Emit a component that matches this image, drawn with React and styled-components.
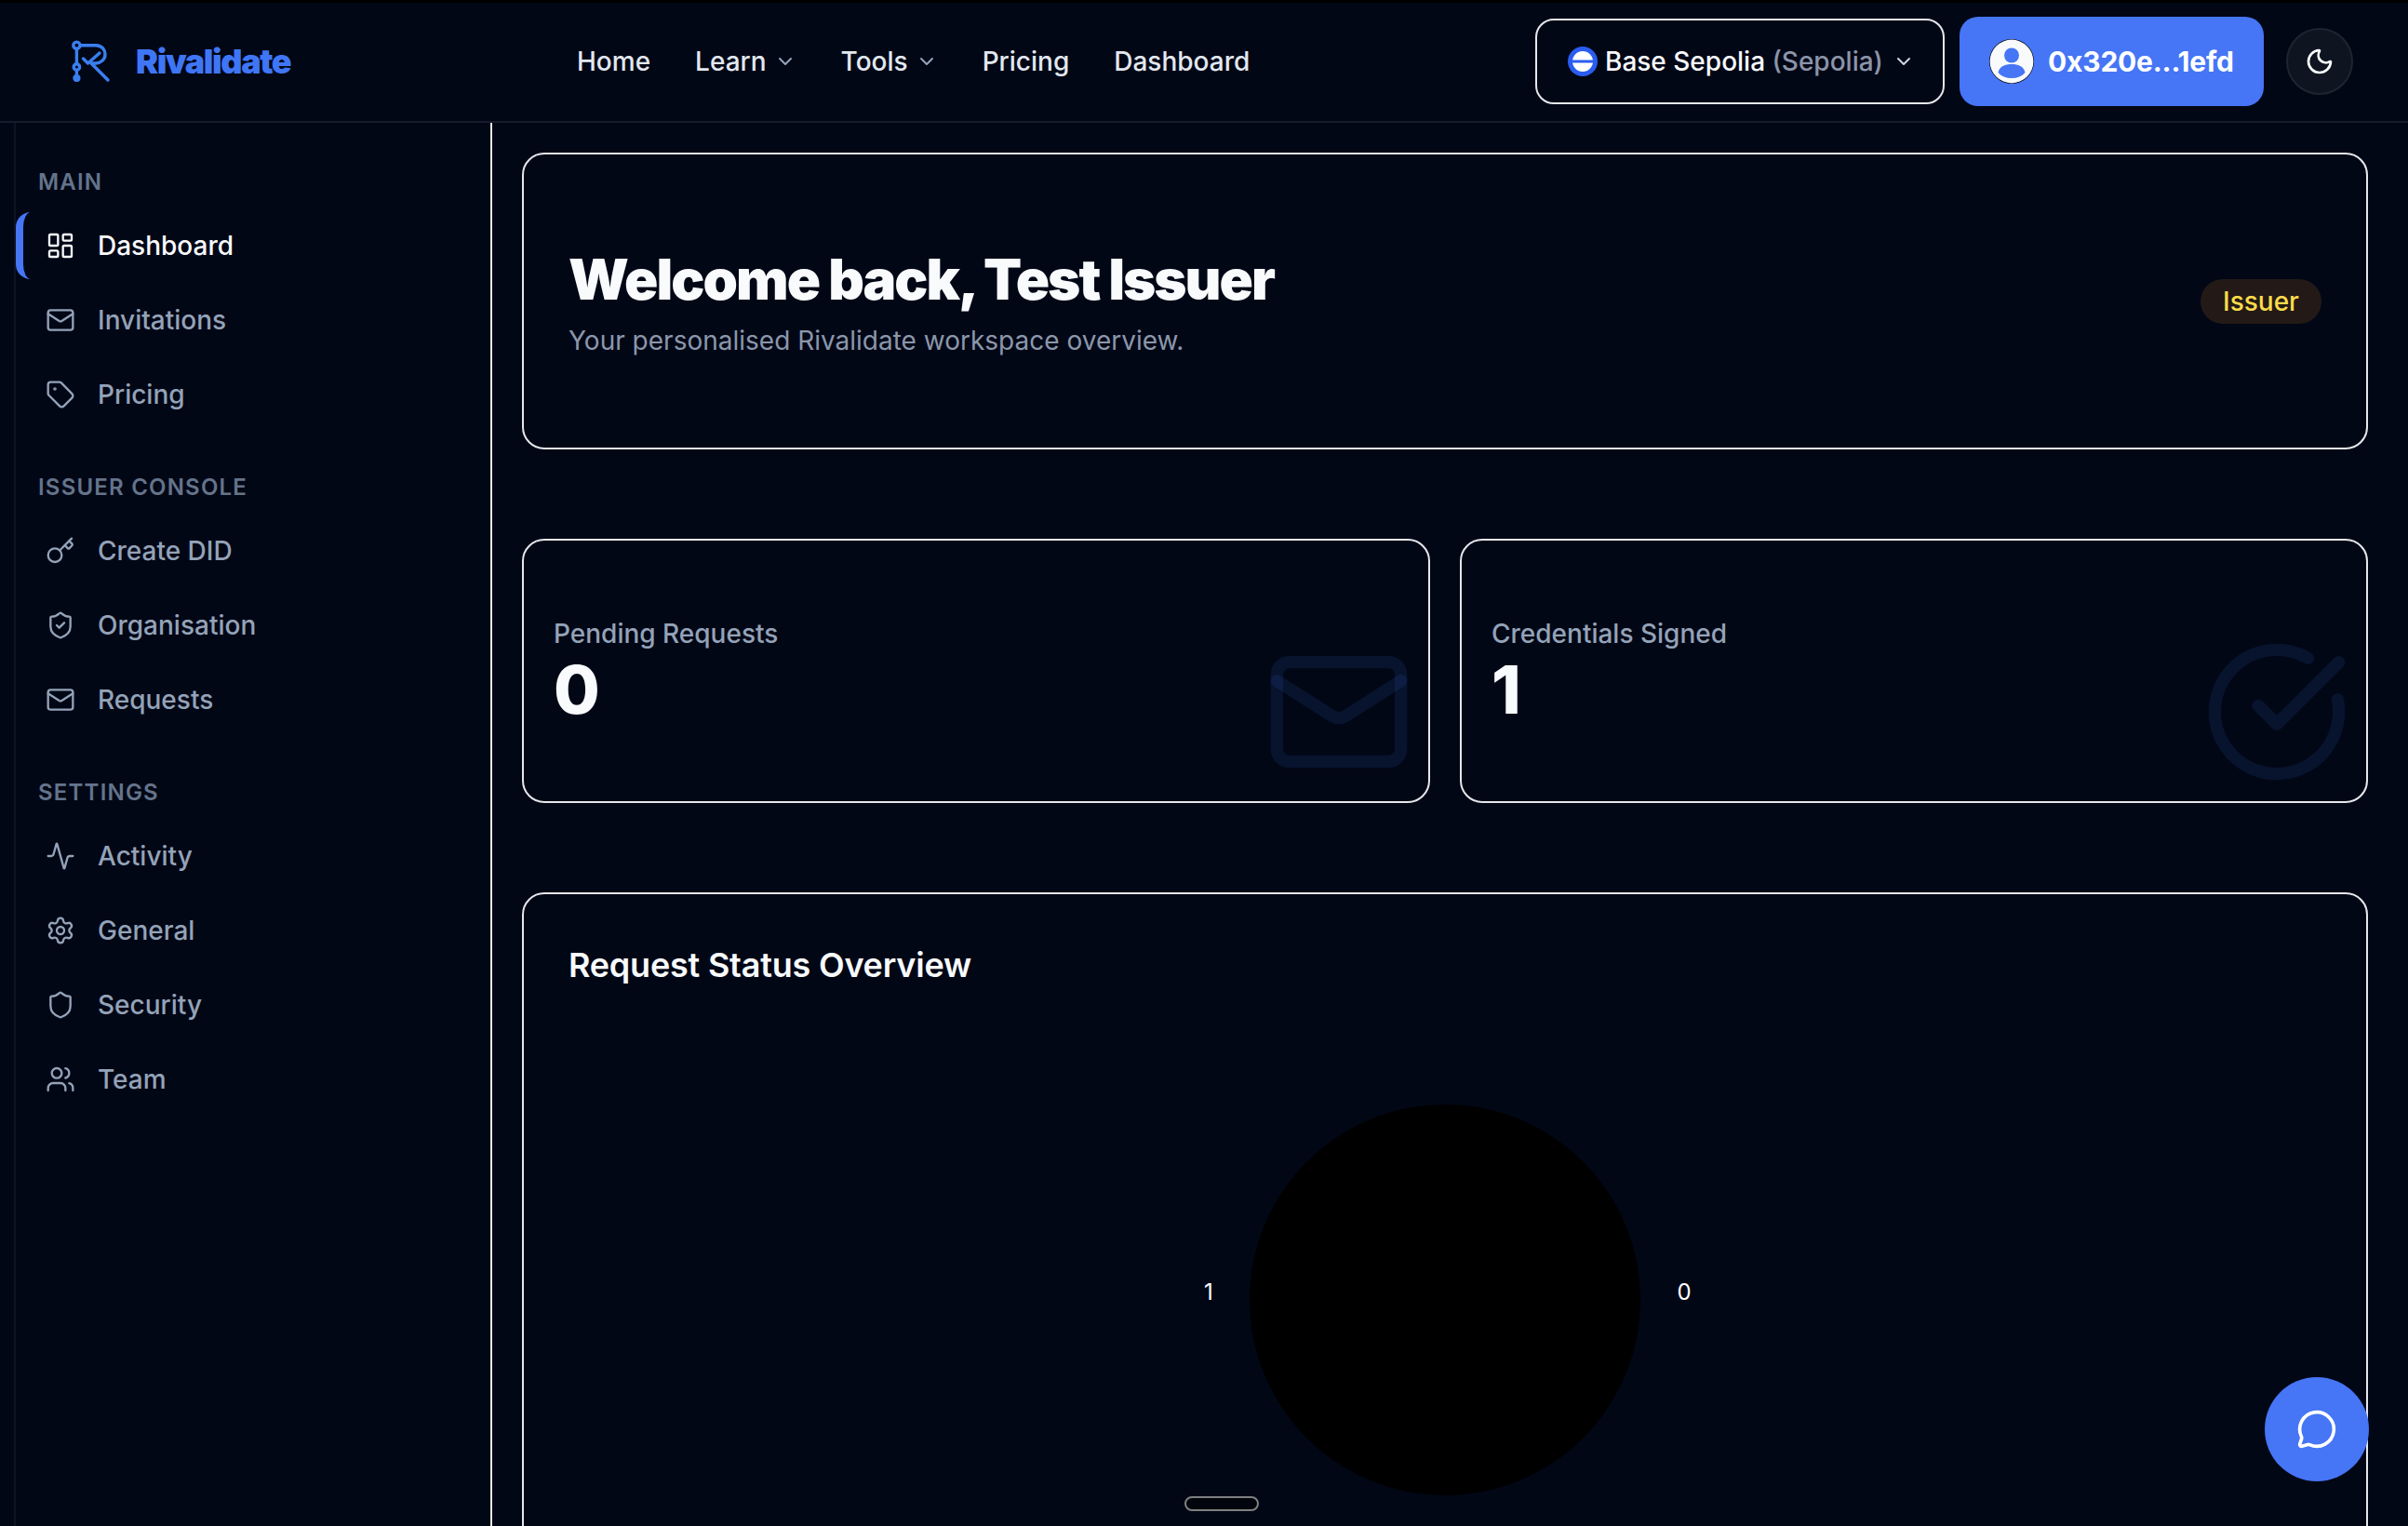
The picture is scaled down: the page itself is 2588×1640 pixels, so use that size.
import React from 'react';
import styled, { createGlobalStyle } from 'styled-components';
import {
  Activity,
  ChevronDown,
  CircleCheckBig,
  Key,
  LayoutDashboard,
  Mail,
  MessageCircle,
  Moon,
  Settings,
  Shield,
  ShieldCheck,
  Tag,
  Users,
} from 'lucide-react';

const GlobalStyle = createGlobalStyle`
  html, body {
    margin: 0;
    height: 100%;
    overflow: hidden;
    background: #020716;
    color: #f8fafc;
    font-family: Inter, "Noto Sans", sans-serif;
  }
  * { box-sizing: border-box; }
`;

const Shell = styled.div`
  height: 100vh;
  display: flex;
  flex-direction: column;
  background: #020716;
`;

// top bar
const Nav = styled.header`
  flex: none;
  height: 132px;
  display: flex;
  align-items: center;
  padding: 0 59px 2px 77px;
  border-top: 3px solid #000;
  border-bottom: 2px solid #171c2c;
`;
const Brand = styled.div`
  flex: 0 0 543px;
  display: flex;
  align-items: center;
  gap: 25px;
`;
const BrandName = styled.span`
  font-size: 36px;
  font-weight: 900;
  letter-spacing: -1.4px;
  color: #3f76f5;
`;
const NavLinks = styled.nav`
  display: flex;
  align-items: center;
  gap: 48px;
`;
const NavLink = styled.a`
  display: flex;
  align-items: center;
  gap: 8px;
  font-size: 28px;
  font-weight: 500;
  color: #e2e8f0;
  svg { color: #94a3b8; }
`;
const NavRight = styled.div`
  margin-left: auto;
  display: flex;
  align-items: center;
`;
const NetworkButton = styled.button`
  width: 440px;
  height: 92px;
  padding: 0 32px 0 33px;
  display: flex;
  align-items: center;
  gap: 8px;
  background: transparent;
  border: 2px solid #e5e7eb;
  border-radius: 20px;
  font: 500 28px Inter, sans-serif;
  color: #f8fafc;
  white-space: nowrap;
  svg { flex: none; }
  svg:last-child { margin-left: 2px; color: #cbd5e1; }
`;
const NetworkHint = styled.span`
  color: #8b95a9;
`;
const WalletButton = styled.button`
  margin-left: 16px;
  width: 327px;
  height: 96px;
  padding: 0 31px 0 32px;
  display: flex;
  align-items: center;
  gap: 15px;
  background: #4675f6;
  border: 0;
  border-radius: 20px;
  font: 700 30px Inter, sans-serif;
  letter-spacing: -0.2px;
  color: #fff;
  white-space: nowrap;
  svg { flex: none; }
`;
const ThemeButton = styled.button`
  margin-left: 24px;
  width: 72px;
  height: 72px;
  display: flex;
  align-items: center;
  justify-content: center;
  background: #0f1520;
  border: 2px solid #1e2530;
  border-radius: 50%;
  color: #f8fafc;
`;

// page body
const Body = styled.div`
  flex: 1;
  min-height: 0;
  display: flex;
`;
const Sidebar = styled.aside`
  flex: 0 0 514px;
  margin-left: 15px;
  padding-top: 48px;
  border-left: 2px solid #0e1423;
  border-right: 2px solid #e5e7eb;
`;
const Section = styled.section`
  margin-bottom: 48px;
`;
const SectionLabel = styled.div`
  height: 32px;
  margin-bottom: 16px;
  padding-left: 24px;
  font-size: 24px;
  line-height: 32px;
  font-weight: 600;
  letter-spacing: 1.2px;
  text-transform: uppercase;
  color: #64748b;
`;
const SideList = styled.div`
  display: flex;
  flex-direction: column;
  gap: 8px;
`;
const SideItem = styled.a`
  height: 72px;
  display: flex;
  align-items: center;
  gap: 24px;
  padding-left: 24px;
  border-left: 8px solid ${(p) => (p.$active ? '#4675f6' : 'transparent')};
  border-radius: 16px;
  font-size: 28px;
  font-weight: 500;
  color: ${(p) => (p.$active ? '#f8fafc' : '#94a3b8')};
`;

const Main = styled.main`
  flex: 1;
  min-width: 0;
  overflow: hidden;
  padding: 32px 43px 0 32px;
  display: flex;
  flex-direction: column;
  gap: 96px;
`;
const Card = styled.div`
  flex: none;
  border: 2px solid #e5e7eb;
  border-radius: 24px;
`;
const WelcomeCard = styled(Card)`
  height: 319px;
  padding: 0 48px;
  display: flex;
  align-items: center;
  justify-content: space-between;
`;
const WelcomeCopy = styled.div`
  padding-top: 2px;
`;
const WelcomeTitle = styled.h1`
  margin: 0 0 10px;
  font-size: 60px;
  line-height: 72px;
  font-weight: 900;
  letter-spacing: -1.95px;
  color: #f8fafc;
`;
const WelcomeText = styled.p`
  margin: 0;
  font-size: 28px;
  line-height: 40px;
  color: #8b97ab;
`;
const RoleBadge = styled.span`
  width: 130px;
  height: 48px;
  display: flex;
  align-items: center;
  justify-content: center;
  border-radius: 24px;
  background: #231a17;
  font-size: 28px;
  font-weight: 500;
  color: #fcdc4a;
`;
const StatGrid = styled.div`
  flex: none;
  display: grid;
  grid-template-columns: 1fr 1fr;
  gap: 32px;
`;
const StatCard = styled(Card)`
  position: relative;
  height: 284px;
  padding: 80px 32px;
`;
const StatLabel = styled.div`
  font-size: 28px;
  line-height: 40px;
  font-weight: 500;
  color: #94a3b8;
`;
const StatValue = styled.div`
  font-size: 72px;
  line-height: 80px;
  font-weight: 800;
  color: #f8fafc;
`;
const StatIcon = styled.div`
  position: absolute;
  right: 16px;
  bottom: 16px;
  display: flex;
  color: rgba(68, 115, 245, 0.11);
`;
const ChartCard = styled(Card)`
  padding: 48px 48px 0;
`;
const ChartTitle = styled.h2`
  margin: 0 0 32px;
  font-size: 36px;
  line-height: 56px;
  font-weight: 600;
  letter-spacing: -0.22px;
  color: #f8fafc;
`;
const ChartSvg = styled.svg`
  display: block;
  text {
    font-family: Inter, sans-serif;
    font-size: 24px;
    fill: #fff;
  }
`;
const ChatButton = styled.button`
  position: fixed;
  right: 42px;
  bottom: 48px;
  width: 112px;
  height: 112px;
  display: flex;
  align-items: center;
  justify-content: center;
  border: 0;
  border-radius: 50%;
  background: #4675f6;
  color: #fff;
`;

const sections = [
  {
    label: 'Main',
    items: [
      { name: 'Dashboard', Icon: LayoutDashboard, active: true },
      { name: 'Invitations', Icon: Mail },
      { name: 'Pricing', Icon: Tag },
    ],
  },
  {
    label: 'Issuer Console',
    items: [
      { name: 'Create DID', Icon: Key },
      { name: 'Organisation', Icon: ShieldCheck },
      { name: 'Requests', Icon: Mail },
    ],
  },
  {
    label: 'Settings',
    items: [
      { name: 'Activity', Icon: Activity },
      { name: 'General', Icon: Settings },
      { name: 'Security', Icon: Shield },
      { name: 'Team', Icon: Users },
    ],
  },
];

const Logo = () => (
  <svg width="44" height="48" viewBox="0 0 44 48" fill="none" stroke="#3a7fef" strokeWidth="3.4" strokeLinecap="round" strokeLinejoin="round">
    <circle cx="5.4" cy="6.7" r="3.6" />
    <path d="M9.5 6.7H26C33 6.7 36 12 36 16.5C36 22 31 26 26 26H21L39 44" />
    <path d="M12.5 21L17.5 26L30 15" />
    <path d="M5.4 10.5V26.5" />
    <circle cx="5.4" cy="30" r="3.2" />
    <path d="M5.4 33.5V42" />
    <circle cx="5.4" cy="42" r="2.4" fill="#3a7fef" />
  </svg>
);

const BaseMark = () => (
  <svg width="32" height="32" viewBox="0 0 32 32">
    <circle cx="16" cy="16" r="16" fill="#2a5cf0" />
    <circle cx="16" cy="16" r="11" fill="#fff" />
    <rect x="5" y="14.5" width="22" height="3" fill="#2a5cf0" />
  </svg>
);

const Avatar = () => (
  <svg width="48" height="48" viewBox="0 0 48 48">
    <circle cx="24" cy="24" r="24" fill="#000" />
    <circle cx="24" cy="24" r="23.4" fill="#f8fafc" />
    <circle cx="24" cy="17.5" r="8" fill="#4675f6" />
    <path d="M9.5 36C11 29 17 27 24 27C31 27 37 29 38.5 36C35 40 30 42 24 42C18 42 13 40 9.5 36Z" fill="#4675f6" />
  </svg>
);

export default function App() {
  return (
    <Shell>
      <GlobalStyle />
      <Nav>
        <Brand>
          <Logo />
          <BrandName>Rivalidate</BrandName>
        </Brand>
        <NavLinks>
          <NavLink>Home</NavLink>
          <NavLink>Learn <ChevronDown size={24} /></NavLink>
          <NavLink>Tools <ChevronDown size={24} /></NavLink>
          <NavLink>Pricing</NavLink>
          <NavLink>Dashboard</NavLink>
        </NavLinks>
        <NavRight>
          <NetworkButton>
            <BaseMark />
            <span>Base Sepolia <NetworkHint>(Sepolia)</NetworkHint></span>
            <ChevronDown size={24} />
          </NetworkButton>
          <WalletButton>
            <Avatar />
            0x320e...1efd
          </WalletButton>
          <ThemeButton>
            <Moon size={32} />
          </ThemeButton>
        </NavRight>
      </Nav>
      <Body>
        <Sidebar>
          {sections.map((section) => (
            <Section key={section.label}>
              <SectionLabel>{section.label}</SectionLabel>
              <SideList>
                {section.items.map(({ name, Icon, active }) => (
                  <SideItem key={name} $active={active}>
                    <Icon size={32} strokeWidth={1.75} />
                    {name}
                  </SideItem>
                ))}
              </SideList>
            </Section>
          ))}
        </Sidebar>
        <Main>
          <WelcomeCard>
            <WelcomeCopy>
              <WelcomeTitle>Welcome back, Test Issuer</WelcomeTitle>
              <WelcomeText>Your personalised Rivalidate workspace overview.</WelcomeText>
            </WelcomeCopy>
            <RoleBadge>Issuer</RoleBadge>
          </WelcomeCard>
          <StatGrid>
            <StatCard>
              <StatLabel>Pending Requests</StatLabel>
              <StatValue>0</StatValue>
              <StatIcon><Mail size={160} /></StatIcon>
            </StatCard>
            <StatCard>
              <StatLabel>Credentials Signed</StatLabel>
              <StatValue>1</StatValue>
              <StatIcon><CircleCheckBig size={160} /></StatIcon>
            </StatCard>
          </StatGrid>
          <ChartCard>
            <ChartTitle>Request Status Overview</ChartTitle>
            <ChartSvg width="1880" height="600" viewBox="0 0 1880 600">
              <circle cx="942" cy="300" r="210" fill="#000" />
              <text x="688" y="300" textAnchor="middle">1</text>
              <text x="1199" y="300" textAnchor="middle">0</text>
              <rect x="663" y="512" width="78" height="14" rx="7" fill="#02050b" stroke="#808080" strokeWidth="2" />
            </ChartSvg>
          </ChartCard>
        </Main>
      </Body>
      <ChatButton><MessageCircle size={44} /></ChatButton>
    </Shell>
  );
}
